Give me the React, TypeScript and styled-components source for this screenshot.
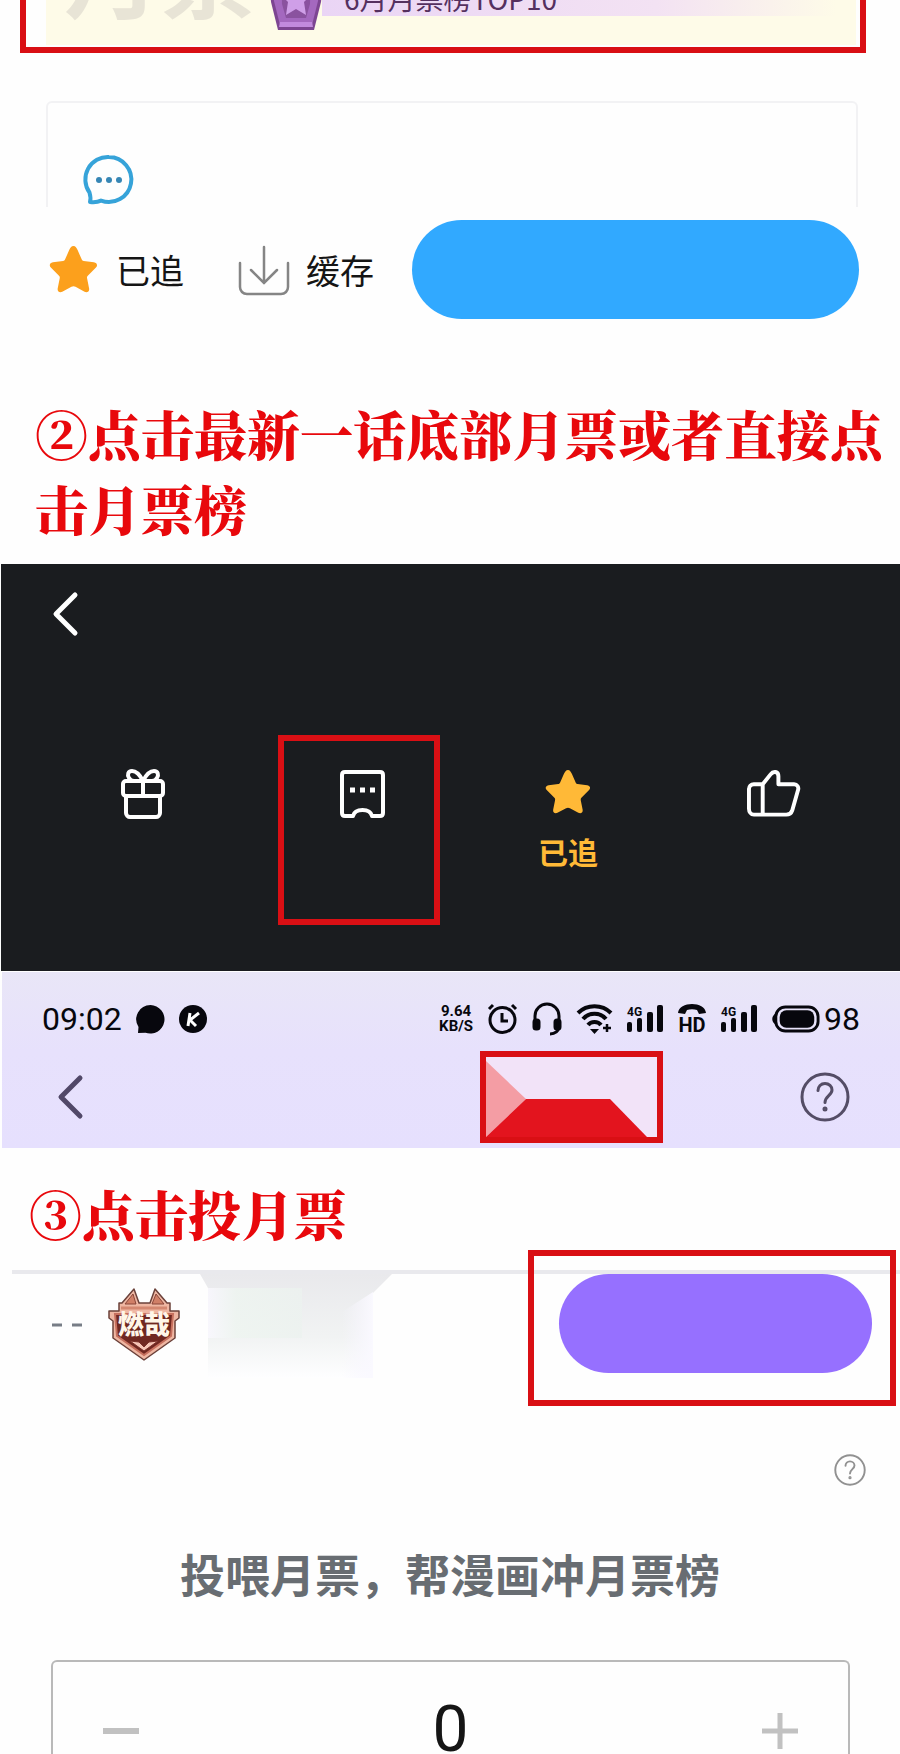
import React from "react";
import styled, { createGlobalStyle } from "styled-components";

const SANS = '"Noto Sans CJK SC", "Noto Sans", sans-serif';
const SERIF = '"Noto Serif CJK SC", "Noto Serif SC", "Noto Sans CJK SC", serif';
const DIGITS = '"Roboto", "Liberation Sans", sans-serif';
const RED = "#d90f14";

const GlobalStyle = createGlobalStyle`
  * { box-sizing: border-box; }
  body { margin: 0; background: #fefefe; font-family: ${SANS}; color: #151515; }
  button { appearance: none; border: 0; padding: 0; margin: 0; background: none; font: inherit; color: inherit; cursor: pointer; }
  svg { display: block; flex: none; overflow: visible; }
`;

const Page = styled.main`
  display: flex;
  flex-direction: column;
`;

const RankFrame = styled.section`
  height: 53px;
  margin: 0 34px 0 20px;
  padding: 0 4px 2px 20px;
  border: 6px solid ${RED};
  border-top: 0;
  overflow: hidden;
  display: flex;
  align-items: flex-end;
`;

const RankBanner = styled.div`
  flex: 1;
  height: 160px;
  display: flex;
  align-items: flex-end;
  padding: 0 20px 15px 18px;
  background: #fefbe8;
`;

const GhostTitle = styled.span`
  width: 206px;
  margin-bottom: 12px;
  font-size: 96px;
  line-height: 96px;
  font-weight: 700;
  white-space: nowrap;
  color: #e8e4d6;
`;

const RankLabel = styled.span`
  flex: 1;
  height: 50px;
  margin-bottom: 14px;
  padding: 12px 0 0 22px;
  font-size: 28px;
  line-height: 40px;
  white-space: nowrap;
  color: #55305f;
  background: linear-gradient(90deg, #ead5f5 0%, #f3e2f3 65%, #fefbe8 100%);
`;

const CommentCard = styled.section`
  height: 106px;
  margin: 48px 42px 0 46px;
  padding: 52px 36px 0;
  border: 2px solid #f2f2f4;
  border-bottom: 0;
  border-radius: 6px 6px 0 0;
`;

const ActionBar = styled.section`
  display: flex;
  align-items: center;
  padding: 13px 41px 13px 49px;
`;

const ActionButton = styled.button<{ $gap: number; $after: number }>`
  display: flex;
  align-items: center;
  gap: ${(p) => p.$gap}px;
  margin-right: ${(p) => p.$after}px;
  font-size: 34px;
  line-height: 48px;
  white-space: nowrap;
`;

const PillButton = styled.button<{ $tone: string }>`
  flex: 1;
  height: 99px;
  border-radius: 50px;
  background: ${(p) => p.$tone};
`;

const StepTitle = styled.h2<{ $inset: number }>`
  margin: 0;
  padding-left: ${(p) => p.$inset}px;
  font-family: ${SERIF};
  font-size: 53px;
  line-height: 75px;
  font-weight: 900;
  color: #e8080c;
`;

const StepTwo = styled.div`
  padding: 64px 0 18px;
`;

const ReaderPanel = styled.section`
  height: 407px;
  margin-left: 1px;
  padding: 28px 0 0;
  background: #1a1c1f;
  color: #fff;
`;

const BackButton = styled.button<{ $inset: number }>`
  display: block;
  margin-left: ${(p) => p.$inset}px;
`;

const ToolGrid = styled.div`
  display: grid;
  grid-template-columns: 277fr 162fr 256fr 204fr;
  margin-top: 99px;
`;

const Tool = styled.button<{ $marked?: boolean; $side?: string }>`
  height: 190px;
  display: flex;
  flex-direction: column;
  align-items: center;
  gap: 13px;
  padding-top: ${(p) => (p.$marked ? 29 : 34)}px;
  padding-left: ${(p) => (p.$side === "left" ? 6 : 0)}px;
  padding-left: ${(p) => (p.$side === "left" || p.$side === "mark" ? 6 : 0)}px;
  padding-right: ${(p) => (p.$side === "right" ? 50 : 0)}px;
  border: ${(p) => (p.$marked ? `6px solid ${RED}` : "0")};
  font-size: 30px;
  line-height: 46px;
  font-weight: 700;
  color: #ffb937;
`;

const LilacHeader = styled.header`
  height: 177px;
  margin-left: 2px;
  background: linear-gradient(180deg, #e9e6f7 0%, #e7e1fc 45%, #e6e0fe 100%);
  border-top: 1px solid #fff;
`;

const StatusBar = styled.div`
  height: 79px;
  padding: 15px 40px 0 40px;
  display: flex;
  align-items: center;
  justify-content: space-between;
  font-family: ${DIGITS};
  color: #07070d;
`;

const StatusText = styled.span`
  font-size: 32px;
  line-height: 40px;
`;

const StatusGroup = styled.div<{ $gap: number }>`
  display: flex;
  align-items: center;
  gap: ${(p) => p.$gap}px;
`;

const Speed = styled.div`
  display: flex;
  flex-direction: column;
  align-items: center;
  font-size: 15px;
  line-height: 15px;
  font-weight: 700;
`;

const NavRow = styled.div`
  display: grid;
  grid-template-columns: 478fr 183fr 237fr;
  align-items: center;
`;

const TabFrame = styled.button`
  height: 92px;
  border: 6px solid ${RED};
  background: #f2e3f8;
  overflow: hidden;
`;

const HelpButton = styled.button<{ $after: number }>`
  justify-self: end;
  display: block;
  margin-right: ${(p) => p.$after}px;
`;

const StepThree = styled.div`
  padding: 28px 0 19px;
`;

const VoteRow = styled.section`
  position: relative;
  display: flex;
  align-items: flex-start;
  margin-left: 12px;
  padding: 0 28px 0 40px;
  border-top: 4px solid #e9e9ed;
`;

const VoteMark = styled.div`
  position: absolute;
  top: -24px;
  right: 4px;
  width: 368px;
  height: 156px;
  border: 6px solid ${RED};
  pointer-events: none;
`;

const Rank = styled.span`
  width: 56px;
  padding-top: 49px;
`;

const Emblem = styled.div`
  width: 92px;
  padding-top: 13px;
`;

const Haze = styled.div`
  width: 192px;
  height: 104px;
  margin-right: 167px;
`;

const HelpRow = styled.div`
  display: flex;
  justify-content: flex-end;
  padding-top: 76px;
`;

const Prompt = styled.p`
  margin: 54px 0 52px;
  font-size: 45px;
  line-height: 68px;
  font-weight: 700;
  text-align: center;
  color: #686d72;
`;

const Stepper = styled.section`
  height: 94px;
  margin: 0 50px 0 51px;
  padding: 22px 50px 0;
  border: 2px solid #b9b9b9;
  border-bottom: 0;
  border-radius: 6px 6px 0 0;
  display: flex;
  align-items: flex-start;
  justify-content: space-between;
  overflow: hidden;
`;

const StepButton = styled.button`
  padding-top: 29px;
`;

const Count = styled.output`
  font-family: ${DIGITS};
  font-size: 64px;
  line-height: 92px;
  color: #151515;
`;

const STAR =
  "M24 2c2 0 3 2 4 4l4 9c.5 1 1 1.500 2 1.600l10 1.400c3 .5 4 3 2 5l-8 8c-.7.700-.9 1.500-.7 2.500l2 10c.5 3-2 4.500-4.500 3.200L26 42c-1.300-.7-2.700-.7-4 0l-9 4.700c-2.500 1.300-5-.2-4.500-3.200l2-10c.2-1 0-1.800-.7-2.500l-8-8c-2-2-1-4.500 2-5l10-1.400c1-.1 1.500-.6 2-1.600l4-9c1-2 2-4 4.200-4z";

function Star({ size, color }: { size: number; color: string }) {
  return (
    <svg width={size} height={size} viewBox="0 1 48 48">
      <path d={STAR} fill={color} />
    </svg>
  );
}

function Chevron({ color }: { color: string }) {
  return (
    <svg width="26" height="44" viewBox="0 0 26 44" fill="none" stroke={color} strokeWidth="5" strokeLinecap="round" strokeLinejoin="round">
      <path d="M23 3 4 22l19 19" />
    </svg>
  );
}

function Help({ size, color, stroke }: { size: number; color: string; stroke: number }) {
  return (
    <svg width={size} height={size} viewBox="0 0 50 50" fill="none" stroke={color} strokeWidth={stroke} strokeLinecap="round">
      <circle cx="25" cy="25" r="23" />
      <path d="M18 18.500c0-4 3-7 7-7s7 3 7 6.500c0 5.500-7 6-7 12.500" />
      <circle cx="25" cy="37" r="1" fill={color} />
    </svg>
  );
}

function Crest() {
  return (
    <svg width="52" height="100" viewBox="0 0 52 100">
      <path d="M-2 40h56l-3 32-7 28H8L1 72z" fill="#7d4592" />
      <path d="M1 40h50l-3 31-6 24H10L4 71z" fill="#a468bf" />
      <path d="M10 92h32l1 5H9z" fill="#c28ade" />
      <path d="M11 40h30l-1 34-4 14H16l-4-14z" fill="#8a529f" />
      <path d="m26 52 4 11 12 1-8 8 2 13-10-6-10 6 2-13-8-8 12-1z" fill="#cf9fe8" />
    </svg>
  );
}

function Signal() {
  return (
    <svg width="36" height="30" viewBox="0 0 36 30" fill="currentColor">
      <text x="0" y="12" fontSize="12" fontWeight="700" fontFamily="Roboto, sans-serif">4G</text>
      <rect x="0" y="18" width="5" height="10" rx="2" />
      <rect x="10" y="14" width="5" height="14" rx="2" />
      <rect x="20" y="8" width="6" height="20" rx="2" />
      <rect x="30" y="1" width="6" height="27" rx="2" />
    </svg>
  );
}

function EmblemArt() {
  return (
    <svg width="72" height="74" viewBox="0 0 72 74">
      <path d="M11 16h3L26 2l5 14h11L47 2l12 14h3v8h9v7l-4 3v17L36 73 5 51V34l-4-3v-7h10z" fill="#efb7a3" stroke="#6b413a" strokeWidth="1.500" strokeLinejoin="round" />
      <path d="m17 17 8-10 3 10zM56 17 48 7l-4 10z" fill="#d07f67" stroke="#8a4639" />
      <path d="M13 21h46" stroke="#d48871" strokeWidth="3" />
      <path d="M7 27h58l-2 22-27 19L9 49z" fill="#702821" stroke="#c7705e" strokeWidth="2" />
      <path d="m22 54 14 10 14-10-9 1-5 5-5-5z" fill="#f5c4b5" stroke="#7a3029" />
      <text x="36" y="47" textAnchor="middle" fontSize="26" fontWeight="900" fontFamily={SANS} fill="#fff6e9">燃哉</text>
    </svg>
  );
}

export default function App() {
  return (
    <>
      <GlobalStyle />
      <Page>
        <RankFrame>
          <RankBanner>
            <GhostTitle>月票</GhostTitle>
            <Crest />
            <RankLabel>6月月票榜TOP10</RankLabel>
          </RankBanner>
        </RankFrame>

        <CommentCard>
          <button aria-label="评论">
            <svg width="50" height="50" viewBox="0 0 50 50" fill="none" stroke="#36a3d9" strokeWidth="4" strokeLinejoin="round">
              <path d="M25 2a22.500 22.500 0 1 1-8 43.600c-3 1.500-6 2-11 1.400 1-3 .5-6-.5-9.500A22.500 22.500 0 0 1 25 2z" />
              <g fill="#3686b5" stroke="none">
                <circle cx="15" cy="25" r="3" />
                <circle cx="25" cy="25" r="3" />
                <circle cx="35" cy="25" r="3" />
              </g>
            </svg>
          </button>
        </CommentCard>

        <ActionBar>
          <ActionButton $gap={18} $after={55}>
            <Star size={49} color="#fca01c" />
            已追
          </ActionButton>
          <ActionButton $gap={17} $after={38}>
            <svg width="50" height="50" viewBox="0 0 50 50" fill="none" stroke="#858585" strokeWidth="2.500" strokeLinecap="round">
              <path d="M1 18v24c0 4 3 7 7 7h34c4 0 7-3 7-7V18M25 2v36M12 25l13 13 13-13" />
            </svg>
            缓存
          </ActionButton>
          <PillButton $tone="#31a9ff" aria-label="开始阅读" />
        </ActionBar>

        <StepTwo>
          <StepTitle $inset={35}>②点击最新一话底部月票或者直接点击月票榜</StepTitle>
        </StepTwo>

        <ReaderPanel>
          <BackButton $inset={51} aria-label="返回">
            <Chevron color="#fff" />
          </BackButton>
          <ToolGrid>
            <Tool $side="left" aria-label="礼物">
              <svg width="44" height="50" viewBox="0 0 44 50" fill="none" stroke="#fff" strokeWidth="4" strokeLinejoin="round">
                <rect x="2" y="12" width="40" height="15" rx="3" />
                <path d="M5 27v17c0 2 2 4 4 4h26c2 0 4-2 4-4V27M22 12v15M22 12c-3-6-6-10-11-10-4 0-5 4-3 7 1 2 3 3 5 3M22 12c3-6 6-10 11-10 4 0 5 4 3 7-1 2-3 3-5 3" />
              </svg>
            </Tool>
            <Tool $marked $side="mark" aria-label="月票">
              <svg width="45" height="48" viewBox="0 0 45 48" fill="none" stroke="#fff" strokeWidth="4" strokeLinejoin="round">
                <path d="M5 2h35c2 0 3 1 3 3v38c0 2-1 3-3 3h-8c-1-4-5-6-9.500-6S14 42 13 46H5c-2 0-3-1-3-3V5c0-2 1-3 3-3z" />
                <path d="M10 20h5M20 20h5M30 20h5" strokeWidth="5" />
              </svg>
            </Tool>
            <Tool>
              <Star size={46} color="#ffb937" />
              已追
            </Tool>
            <Tool $side="right" aria-label="点赞">
              <svg width="53" height="48" viewBox="0 0 54 48" fill="none" stroke="#fff" strokeWidth="4" strokeLinejoin="round">
                <path d="M16 15H7c-3 0-5 2-5 5v20c0 3 2 6 5 6h33c3 0 5-1 6-4l6-21c1-3-1-6-4-6H32V7c0-5-5-6-8-2zM16 15v31" />
              </svg>
            </Tool>
          </ToolGrid>
        </ReaderPanel>

        <LilacHeader>
          <StatusBar>
            <StatusGroup $gap={14}>
              <StatusText>09:02</StatusText>
              <svg width="29" height="29" viewBox="0 0 29 29">
                <path d="M14.500 0a14.300 14.300 0 1 1-5 27.800L2 28l.5-6A14.300 14.300 0 0 1 14.500 0z" fill="currentColor" />
              </svg>
              <svg width="28" height="28" viewBox="0 0 28 28">
                <circle cx="14" cy="14" r="14" fill="currentColor" />
                <path d="m11 8-2 13M20 8l-9 7 6 6" fill="none" stroke="#fff" strokeWidth="3" />
              </svg>
            </StatusGroup>
            <StatusGroup $gap={15}>
              <Speed>
                <span>9.64</span>
                <span>KB/S</span>
              </Speed>
              <svg width="29" height="30" viewBox="0 0 29 30" fill="none" stroke="currentColor" strokeWidth="3">
                <circle cx="14.500" cy="16" r="12.500" />
                <path d="M14 9v8h6M1 5l4-4M28 5l-4-4" />
              </svg>
              <svg width="30" height="34" viewBox="0 0 30 34" fill="none" stroke="currentColor" strokeWidth="3">
                <path d="M3 19v-5a12 12 0 0 1 24 0v10c0 5-4 8-9 8" />
                <rect x="2" y="18" width="5" height="9" rx="2" fill="currentColor" />
                <rect x="23" y="18" width="5" height="9" rx="2" fill="currentColor" />
              </svg>
              <svg width="35" height="30" viewBox="0 0 35 30" fill="none" stroke="currentColor" strokeWidth="4">
                <path d="M1 9c9-9 24-9 33 0M6 15c6-7 17-7 23 0M11 21c3-4 10-4 13 0" />
                <path d="m13 25 4.500 5 4.500-5z" fill="currentColor" stroke="none" />
                <path d="M30 20v8M26 24h8" strokeWidth="2.500" />
              </svg>
              <Signal />
              <svg width="28" height="30" viewBox="0 0 28 30" fill="currentColor">
                <path d="M0 9c1-12 27-12 28 0l-7 1-2-4c-3-1-7-1-10 0l-2 4z" />
                <text x="14" y="28" textAnchor="middle" fontSize="20" fontWeight="700" fontFamily="Roboto, sans-serif">HD</text>
              </svg>
              <Signal />
              <StatusGroup $gap={4}>
                <svg width="48" height="28" viewBox="0 0 50 28">
                  <rect x="4" y="1.500" width="44" height="25" rx="10" fill="none" stroke="currentColor" strokeWidth="3" />
                  <rect x="8" y="5" width="36" height="18" rx="7" fill="currentColor" />
                  <path d="M4 8c-5 3-5 9 0 12z" fill="currentColor" />
                </svg>
                <StatusText>98</StatusText>
              </StatusGroup>
            </StatusGroup>
          </StatusBar>
          <NavRow>
            <BackButton $inset={55} aria-label="返回">
              <Chevron color="#514868" />
            </BackButton>
            <TabFrame aria-label="月票榜">
              <svg width="171" height="80" viewBox="0 0 171 80">
                <path d="M0 4 40 42 0 80z" fill="#f49da4" />
                <path d="m0 80 40-38h84l37 38z" fill="#e3141e" />
              </svg>
            </TabFrame>
            <HelpButton $after={50} aria-label="帮助">
              <Help size={50} color="#544d66" stroke={3} />
            </HelpButton>
          </NavRow>
        </LilacHeader>

        <StepThree>
          <StepTitle $inset={29}>③点击投月票</StepTitle>
        </StepThree>

        <VoteRow>
          <Rank>
            <svg width="30" height="4" viewBox="0 0 30 4">
              <path d="M0 2h10M20 2h10" stroke="#777d86" strokeWidth="3" />
            </svg>
          </Rank>
          <Emblem>
            <EmblemArt />
          </Emblem>
          <Haze>
            <svg width="192" height="104" viewBox="0 0 192 104">
              <defs>
                <linearGradient id="hazeTop" x1="0" y1="0" x2="0" y2="1">
                  <stop offset="0" stopColor="#e9e9ec" />
                  <stop offset="0.600" stopColor="#f1f3f3" />
                  <stop offset="1" stopColor="#fefeff" />
                </linearGradient>
                <linearGradient id="hazeSide" x1="0" y1="0" x2="1" y2="0">
                  <stop offset="0" stopColor="#faf8ff" />
                  <stop offset="0.300" stopColor="#eef5f0" />
                  <stop offset="1" stopColor="#ecf2ef" />
                </linearGradient>
                <linearGradient id="hazeEdge" x1="0" y1="0" x2="1" y2="0">
                  <stop offset="0" stopColor="#f7f5ff" stopOpacity="0" />
                  <stop offset="1" stopColor="#faf9ff" />
                </linearGradient>
              </defs>
              <path d="M0 0h192l-20 20v84H8V14z" fill="url(#hazeTop)" />
              <path d="M8 14h94v50H8z" fill="url(#hazeSide)" opacity="0.800" />
              <path d="M142 38l31-20v86h-31z" fill="url(#hazeEdge)" />
            </svg>
          </Haze>
          <PillButton $tone="#9670ff" aria-label="投月票" />
          <VoteMark />
        </VoteRow>

        <HelpRow>
          <HelpButton $after={34} aria-label="月票说明">
            <Help size={32} color="#919191" stroke={3} />
          </HelpButton>
        </HelpRow>

        <Prompt>投喂月票，帮漫画冲月票榜</Prompt>

        <Stepper>
          <StepButton aria-label="减少">
            <svg width="36" height="36" viewBox="0 0 36 36">
              <path d="M0 18h36" stroke="#c1c1c1" strokeWidth="6" />
            </svg>
          </StepButton>
          <Count>0</Count>
          <StepButton aria-label="增加">
            <svg width="36" height="36" viewBox="0 0 36 36">
              <path d="M0 18h36M18 0v36" stroke="#c1c1c1" strokeWidth="5" />
            </svg>
          </StepButton>
        </Stepper>
      </Page>
    </>
  );
}
